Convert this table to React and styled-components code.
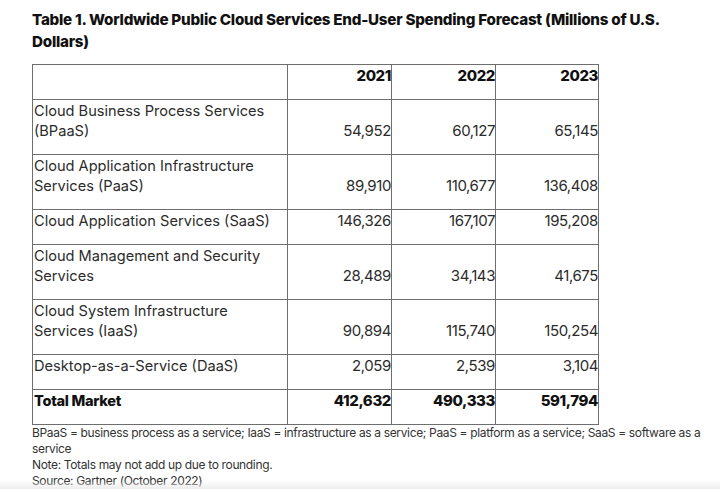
import React from "react";
import styled, { createGlobalStyle } from "styled-components";

const rows = [
  { label: "Cloud Business Process Services (BPaaS)", values: ["54,952", "60,127", "65,145"] },
  { label: "Cloud Application Infrastructure Services (PaaS)", values: ["89,910", "110,677", "136,408"] },
  { label: "Cloud Application Services (SaaS)", values: ["146,326", "167,107", "195,208"] },
  { label: "Cloud Management and Security Services", values: ["28,489", "34,143", "41,675"] },
  { label: "Cloud System Infrastructure Services (IaaS)", values: ["90,894", "115,740", "150,254"] },
  { label: "Desktop-as-a-Service (DaaS)", values: ["2,059", "2,539", "3,104"] },
];

const total = ["412,632", "490,333", "591,794"];

export default function App() {
  return (
    <>
      <GlobalStyle />
      <Page>
        <Title>
          Table 1. Worldwide Public Cloud Services End-User Spending Forecast
          (Millions of U.S. Dollars)
        </Title>
        <Table>
          <colgroup>
            <col style={{ width: 255 }} />
            <col style={{ width: 104 }} />
            <col style={{ width: 104 }} />
            <col style={{ width: 103 }} />
          </colgroup>
          <thead>
            <tr>
              <Cell as="th" />
              <Num as="th" $bold>2021</Num>
              <Num as="th" $bold>2022</Num>
              <Num as="th" $bold>2023</Num>
            </tr>
          </thead>
          <tbody>
            {rows.map((r) => (
              <tr key={r.label}>
                <Cell>{r.label}</Cell>
                {r.values.map((v, i) => (
                  <Num key={i}>{v}</Num>
                ))}
              </tr>
            ))}
            <tr>
              <Cell $bold>Total Market</Cell>
              {total.map((v, i) => (
                <Num key={i} $bold>
                  {v}
                </Num>
              ))}
            </tr>
          </tbody>
        </Table>
        <Notes>
          <p>
            BPaaS = business process as a service; IaaS = infrastructure as a
            service; PaaS = platform as a service; SaaS = software as a service
          </p>
          <p>Note: Totals may not add up due to rounding.</p>
          <p>Source: Gartner (October 2022)</p>
        </Notes>
      </Page>
      <BottomFade />
    </>
  );
}

const GlobalStyle = createGlobalStyle`
  html, body {
    margin: 0;
    background: #fff;
  }
  body {
    font-family: Inter, "Liberation Sans", sans-serif;
    color: #2b2b2b;
  }
`;

const Page = styled.div`
  padding: 9px 0 0 32px;
  width: 680px;
`;

const Title = styled.h2`
  margin: 0 0 11px;
  font-size: 15.2px;
  line-height: 22px;
  font-weight: 800;
  color: #111;
  letter-spacing: -0.25px;
  width: 645px;
`;

const Table = styled.table`
  border-collapse: collapse;
  table-layout: fixed;
  width: 566px;
  border: 1px solid #6e6e6e;
`;

const Cell = styled.td`
  border: 1px solid #6e6e6e;
  padding: 1px 1px 13px 1px;
  font-size: 14.6px;
  line-height: 20px;
  font-weight: ${(p) => (p.$bold ? 800 : 400)};
  color: ${(p) => (p.$bold ? "#111" : "#2b2b2b")};
  text-align: left;
  vertical-align: top;
  letter-spacing: ${(p) => (p.$bold ? "-0.3px" : "0")};
`;

const Num = styled(Cell)`
  text-align: right;
  vertical-align: bottom;
  padding-right: 0;
  font-size: 15px;
  letter-spacing: -0.4px;
`;

const Notes = styled.div`
  font-size: 12px;
  line-height: 16px;
  letter-spacing: -0.35px;
  color: #333;
  p {
    margin: 0;
  }
`;

const BottomFade = styled.div`
  position: fixed;
  left: 0;
  right: 0;
  bottom: 0;
  height: 8px;
  background: linear-gradient(rgba(236, 236, 236, 0), #ececec);
  pointer-events: none;
`;
